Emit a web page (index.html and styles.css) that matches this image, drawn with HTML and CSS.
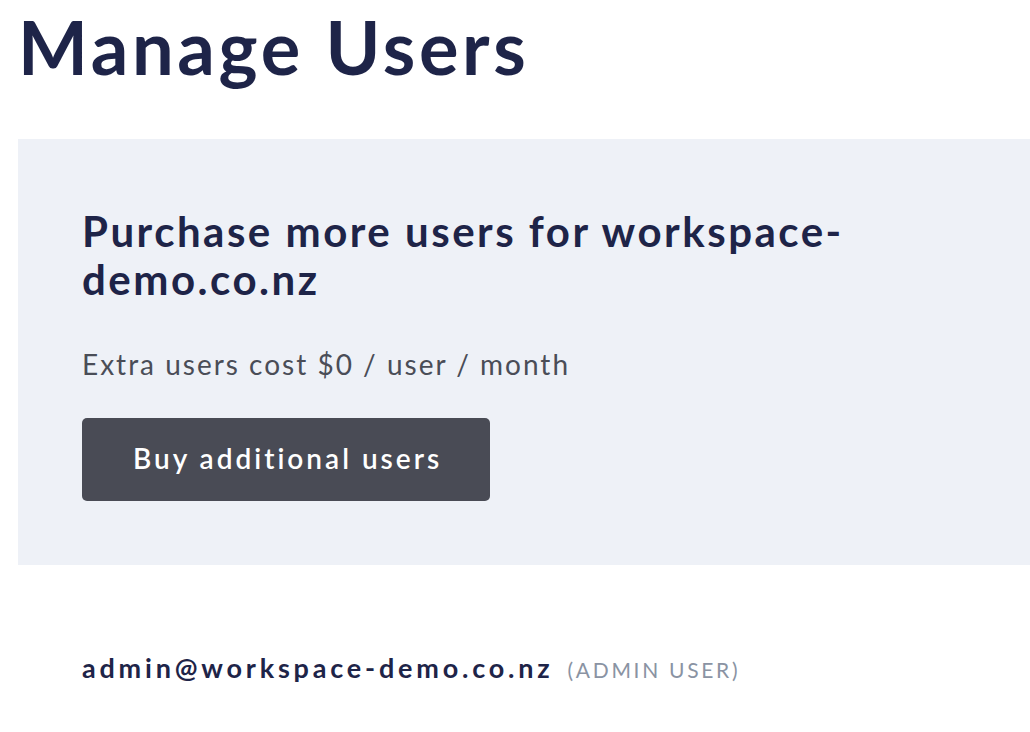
FILE: index.html
```html
<!DOCTYPE html>
<html lang="en">
<head>
    <meta charset="UTF-8">
    <meta name="viewport" content="width=device-width, initial-scale=1.0">
    <title>Manage Users</title>
    <link rel="stylesheet" href="styles.css">
</head>
<body>
    <div class="page">
        <h1>Manage Users</h1>

        <div class="purchase-panel">
            <h2>Purchase more users for workspace-demo.co.nz</h2>
            <p>Extra users cost $0 / user / month</p>
            <a href="#" class="buy-button">Buy additional users</a>
        </div>

        <div class="user-list">
            <div class="user-row">
                <span class="user-email">admin@workspace-demo.co.nz</span>
                <span class="user-role">(Admin user)</span>
            </div>
        </div>
    </div>
</body>
</html>
```

FILE: styles.css
```css
body {
    margin: 0;
    padding: 0;
    font-family: 'Lato', 'Noto Sans', sans-serif;
    background-color: white;
    color: #1e2448;
    overflow: hidden;
}

.page {
    padding-left: 18px;
}

h1 {
    margin: 3px 0 47px 0;
    font-size: 74px;
    font-weight: 700;
    line-height: 1.2;
    letter-spacing: 3.7px;
    color: #1e2448;
}

.purchase-panel {
    background-color: #eef1f7;
    padding: 68px 64px 64px 64px;
    margin-right: -20px;
}

h2 {
    margin: 0 0 42px 0;
    font-size: 42px;
    font-weight: 700;
    line-height: 48px;
    letter-spacing: 2.5px;
    color: #1e2448;
    max-width: 800px;
}

.purchase-panel p {
    margin: 0 0 34px 0;
    font-size: 28px;
    line-height: 1.4;
    letter-spacing: 2px;
    color: #4a4d57;
}

.buy-button {
    display: inline-block;
    background-color: #494b55;
    color: white;
    text-decoration: none;
    font-size: 28px;
    font-weight: 600;
    line-height: 1.2;
    letter-spacing: 3px;
    padding: 24px 48px 25px 51px;
    border-radius: 5px;
}

.user-list {
    margin-top: 87px;
    padding-left: 64px;
}

.user-row {
    display: flex;
    align-items: baseline;
    gap: 14px;
}

.user-email {
    font-size: 27px;
    font-weight: 700;
    line-height: 1.2;
    letter-spacing: 3.8px;
    color: #1e2448;
}

.user-role {
    font-size: 21px;
    text-transform: uppercase;
    letter-spacing: 2.7px;
    color: #8a93a3;
}
```
